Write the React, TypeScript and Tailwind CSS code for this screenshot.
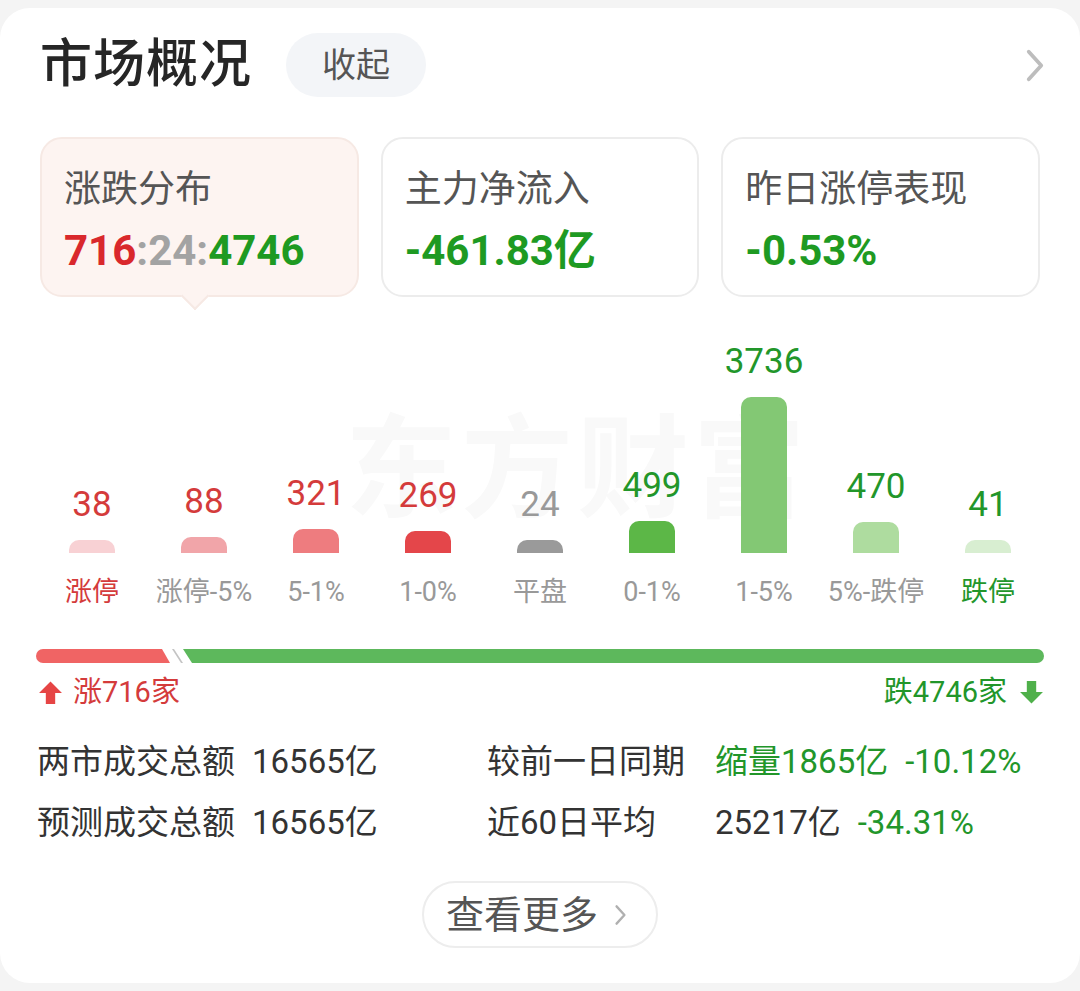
import React from "react";

const columns = [
  { n: "38", num: "text-[#d43b3b]", bar: "h-[13px] bg-[#f8d1d4]", label: "涨停", lc: "text-[#d43b3b]" },
  { n: "88", num: "text-[#d43b3b]", bar: "h-[16px] bg-[#f1a5a9]", label: "涨停-5%", lc: "text-[#999999]" },
  { n: "321", num: "text-[#d43b3b]", bar: "h-[24px] bg-[#ee7c7f]", label: "5-1%", lc: "text-[#999999]" },
  { n: "269", num: "text-[#d43b3b]", bar: "h-[22px] bg-[#e4464a]", label: "1-0%", lc: "text-[#999999]" },
  { n: "24", num: "text-[#999999]", bar: "h-[13px] bg-[#9a9a9a]", label: "平盘", lc: "text-[#999999]" },
  { n: "499", num: "text-[#22962a]", bar: "h-[32px] bg-[#5cb747]", label: "0-1%", lc: "text-[#999999]" },
  { n: "3736", num: "text-[#22962a]", bar: "h-[156px] bg-[#83c874]", label: "1-5%", lc: "text-[#999999]" },
  { n: "470", num: "text-[#22962a]", bar: "h-[31px] bg-[#aedc9f]", label: "5%-跌停", lc: "text-[#999999]" },
  { n: "41", num: "text-[#22962a]", bar: "h-[13px] bg-[#d8eed1]", label: "跌停", lc: "text-[#22962a]" },
];

const Chevron = ({ className }: { className: string }) => (
  <svg viewBox="0 0 16 28" className={className} fill="none">
    <polyline points="3,3 13,14 3,25" stroke="currentColor" strokeWidth="3" strokeLinecap="round" strokeLinejoin="round" />
  </svg>
);

const BigArrow = ({ up, className }: { up: boolean; className: string }) => (
  <svg viewBox="0 0 24 24" className={className}>
    {up ? (
      <path d="M12 1.5 L23 12.5 H16.5 V23 H7.5 V12.5 H1 Z" fill="currentColor" strokeLinejoin="round" />
    ) : (
      <path d="M12 22.5 L23 11.5 H16.5 V1 H7.5 V11.5 H1 Z" fill="currentColor" strokeLinejoin="round" />
    )}
  </svg>
);

const App = () => {
  return (
    <div className="w-[1080px] h-[991px] overflow-hidden bg-[#f4f4f4] pt-[8px] font-[Roboto,'Noto_Sans_CJK_SC',sans-serif]">
      <div className="bg-white rounded-[30px] h-[975px]">
        {/* header */}
        <div className="flex items-center pl-[40px] pr-[35px] pt-[25px]">
          <div className="text-[52px] leading-none font-medium text-[#262626] tracking-[1px]">市场概况</div>
          <div className="ml-[34px] h-[64px] w-[140px] rounded-full bg-[#f3f5f8] flex items-center justify-center text-[34px] text-[#555555] leading-none">
            收起
          </div>
          <div className="flex-1" />
          <Chevron className="w-[20px] h-[35px] text-[#bdbdbd]" />
        </div>

        {/* summary cards */}
        <div className="grid grid-cols-3 gap-[22px] px-[40px] mt-[40px]">
          <div className="relative h-[160px] rounded-[22px] bg-[#fdf4f1] border-2 border-[#f6e9e4] pl-[22px] pt-[32px]">
            <div className="text-[37px] leading-none text-[#555555]">涨跌分布</div>
            <div className="mt-[22px] text-[42px] leading-none font-bold">
              <span className="text-[#d9282c]">716</span>
              <span className="text-[#a3a3a3]">:24:</span>
              <span className="text-[#1e9a22]">4746</span>
            </div>
            <div className="absolute left-[143px] bottom-[-11px] w-[20px] h-[20px] rotate-45 bg-[#fdf4f1] border-r-2 border-b-2 border-[#f6e9e4]" />
          </div>
          <div className="h-[160px] rounded-[22px] bg-white border-2 border-[#ececec] pl-[22px] pt-[32px]">
            <div className="text-[37px] leading-none text-[#555555]">主力净流入</div>
            <div className="mt-[22px] text-[42px] leading-none font-bold text-[#1e9a22]">-461.83亿</div>
          </div>
          <div className="h-[160px] rounded-[22px] bg-white border-2 border-[#ececec] pl-[22px] pt-[32px]">
            <div className="text-[37px] leading-none text-[#555555]">昨日涨停表现</div>
            <div className="mt-[22px] text-[42px] leading-none font-bold text-[#1e9a22]">-0.53%</div>
          </div>
        </div>

        {/* distribution chart */}
        <div className="relative px-[36px]">
          <div className="absolute left-[345px] top-[118px] text-[112px] leading-none font-bold text-[#f9f9f9] tracking-[4px] select-none">
            东方财富
          </div>
          <div className="relative h-[309px] flex items-end">
            {columns.map((c) => (
              <div key={c.label} className="w-[112px] flex flex-col items-center">
                <div className={`text-[35px] leading-none ${c.num}`}>{c.n}</div>
                <div className={`mt-[18px] w-[46px] rounded-t-[10px] ${c.bar}`} />
                <div className={`mt-[26px] text-[27px] leading-none whitespace-nowrap ${c.lc}`}>{c.label}</div>
              </div>
            ))}
          </div>

          {/* up / down split */}
          <div className="mt-[43px] flex h-[14px]">
            <div className="w-[134px] h-full rounded-l-full bg-[#f06464] [clip-path:polygon(0_0,126px_0,134px_100%,0_100%)]" />
            <div className="w-[13px] h-full bg-[#c4c4c4] [clip-path:polygon(2px_0,4px_0,13px_100%,11px_100%)]" />
            <div className="flex-1 h-full rounded-r-full bg-[#5db85c] [clip-path:polygon(0_0,100%_0,100%_100%,9px_100%)]" />
          </div>
          <div className="mt-[15px] flex items-center justify-between text-[29px] leading-none">
            <div className="flex items-center text-[#d43b3b]">
              <BigArrow up className="w-[25px] h-[25px] ml-[2px] text-[#e64545]" />
              <span className="ml-[10px]">涨716家</span>
            </div>
            <div className="flex items-center text-[#22962a]">
              <span>跌4746家</span>
              <BigArrow up={false} className="w-[25px] h-[25px] ml-[12px] text-[#4fb04a]" />
            </div>
          </div>
        </div>

        {/* turnover stats */}
        <div className="mt-[38px] pl-[37px] grid grid-cols-[450px_1fr] gap-y-[28px] text-[33px] leading-none text-[#333333]">
          <div className="flex">
            <span>两市成交总额</span>
            <span className="ml-[17px]">16565亿</span>
          </div>
          <div className="flex">
            <span className="w-[228px]">较前一日同期</span>
            <span className="text-[#22962a]">缩量1865亿</span>
            <span className="ml-[17px] text-[#22962a]">-10.12%</span>
          </div>
          <div className="flex">
            <span>预测成交总额</span>
            <span className="ml-[17px]">16565亿</span>
          </div>
          <div className="flex">
            <span className="w-[228px]">近60日平均</span>
            <span>25217亿</span>
            <span className="ml-[17px] text-[#22962a]">-34.31%</span>
          </div>
        </div>

        {/* more button */}
        <div className="mt-[42px] flex justify-center">
          <div className="h-[67px] w-[236px] rounded-full border-2 border-[#ededed] flex items-center pl-[22px]">
            <span className="text-[38px] leading-none text-[#555555]">查看更多</span>
            <Chevron className="ml-[16px] w-[13px] h-[22px] text-[#b0b0b0]" />
          </div>
        </div>
      </div>
    </div>
  );
};

export default App;
